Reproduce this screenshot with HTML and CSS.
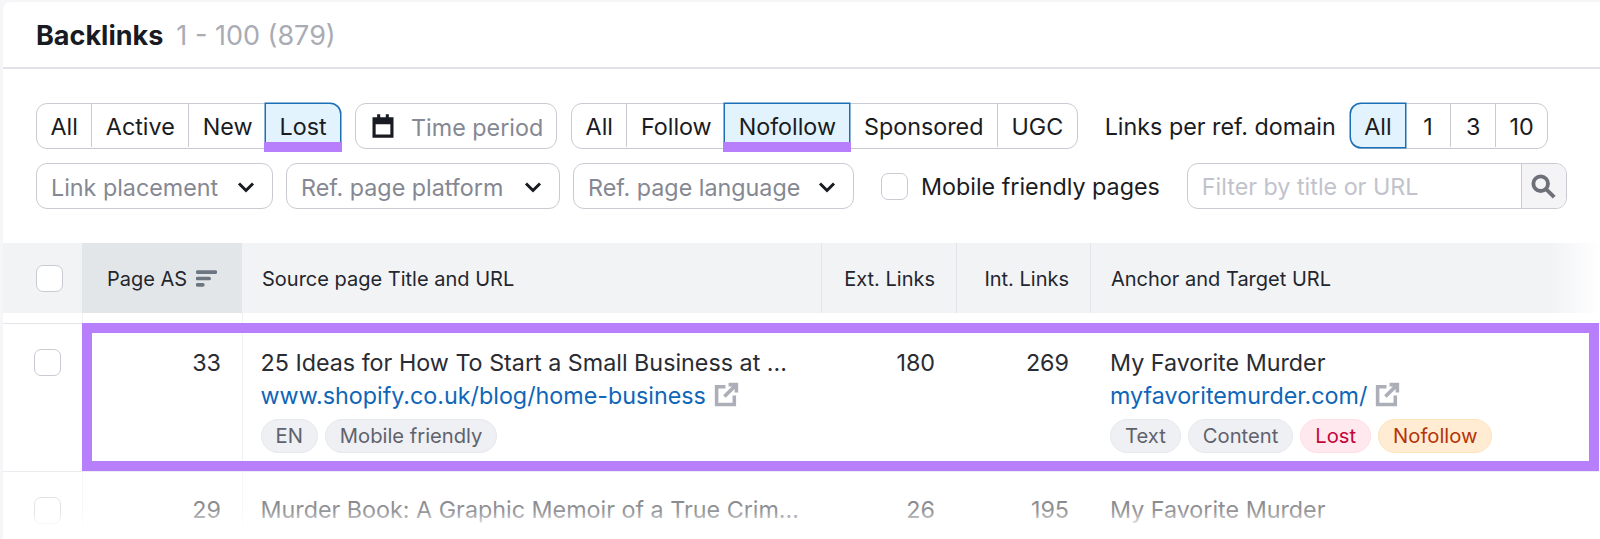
FILE: index.html
```html
<!DOCTYPE html>
<html lang="en">
<head>
<meta charset="utf-8">
<title>Backlinks</title>
<link rel="stylesheet" href="styles.css">
</head>
<body>
<main class="card">
  <header class="title-bar">
    <h1 class="title">Backlinks</h1>
    <span class="count">1 - 100 (879)</span>
  </header>
  <section class="filters">
    <div class="filter-row row-one">
      <div class="seg">
        <button class="seg-item">All</button>
        <button class="seg-item">Active</button>
        <button class="seg-item">New</button>
        <button class="seg-item active marked last">Lost</button>
      </div>
      <button class="field period">
        <svg class="cal" viewBox="0 0 24 24" aria-hidden="true"><path d="M7 2h2.600v2.500h4.800V2H17v2.500h4V22H3V4.500h4V2zM5.700 10.500v8.800h12.600v-8.800H5.700z" fill-rule="evenodd"/></svg>
        <span class="muted">Time period</span>
      </button>
      <div class="seg">
        <button class="seg-item">All</button>
        <button class="seg-item">Follow</button>
        <button class="seg-item active marked">Nofollow</button>
        <button class="seg-item">Sponsored</button>
        <button class="seg-item">UGC</button>
      </div>
      <span class="per-label">Links per ref. domain</span>
      <div class="seg">
        <button class="seg-item active first">All</button>
        <button class="seg-item digit">1</button>
        <button class="seg-item digit">3</button>
        <button class="seg-item digit">10</button>
      </div>
    </div>
    <div class="filter-row row-two">
      <button class="field select w-placement"><span class="muted">Link placement</span><svg class="chev" viewBox="0 0 18 12" aria-hidden="true"><path d="M2 2.500l7 7 7-7"/></svg></button>
      <button class="field select w-platform"><span class="muted">Ref. page platform</span><svg class="chev" viewBox="0 0 18 12" aria-hidden="true"><path d="M2 2.500l7 7 7-7"/></svg></button>
      <button class="field select w-language"><span class="muted">Ref. page language</span><svg class="chev" viewBox="0 0 18 12" aria-hidden="true"><path d="M2 2.500l7 7 7-7"/></svg></button>
      <label class="mobile"><span class="box"></span><span>Mobile friendly pages</span></label>
      <div class="search">
        <span class="search-input">Filter by title or URL</span>
        <span class="search-btn"><svg viewBox="0 0 24 24" aria-hidden="true"><circle cx="9.500" cy="9.500" r="6.500"/><path d="M14.500 14.500l7 7"/></svg></span>
      </div>
    </div>
  </section>
  <section class="table">
    <div class="thead grid">
      <div class="cell check"><span class="box"></span></div>
      <div class="cell sorted">Page AS
        <svg class="sort" viewBox="0 0 20 16" aria-hidden="true"><path d="M1.500 2h17M1.500 8h11M1.500 14h5"/></svg>
      </div>
      <div class="cell">Source page Title and URL</div>
      <div class="cell num ruled">Ext. Links</div>
      <div class="cell num ruled">Int. Links</div>
      <div class="cell ruled">Anchor and Target URL</div>
    </div>
    <div class="spacer grid"><div></div><div class="colrule"></div><div class="colrule"></div></div>
    <div class="row grid">
      <div class="td check"><span class="box"></span></div>
      <div class="td num tall colrule">33</div>
      <div class="td colrule">
        <div class="line">25 Ideas for How To Start a Small Business at ...</div>
        <div class="link"><a>www.shopify.co.uk/blog/home-business</a><svg class="ext" viewBox="0 0 24 24" aria-hidden="true"><path d="M11 4.500H2.500v17h17V13M10 14L21 3M14 2.500h7.500V10"/></svg></div>
        <div class="tags"><span class="tag">EN</span><span class="tag">Mobile friendly</span></div>
      </div>
      <div class="td num">180</div>
      <div class="td num">269</div>
      <div class="td">
        <div class="line">My Favorite Murder</div>
        <div class="link"><a>myfavoritemurder.com/</a><svg class="ext" viewBox="0 0 24 24" aria-hidden="true"><path d="M11 4.500H2.500v17h17V13M10 14L21 3M14 2.500h7.500V10"/></svg></div>
        <div class="tags"><span class="tag">Text</span><span class="tag">Content</span><span class="tag lost">Lost</span><span class="tag nofollow">Nofollow</span></div>
      </div>
      <div class="highlight"></div>
    </div>
    <div class="row next grid">
      <div class="td check"><span class="box"></span></div>
      <div class="td num colrule">29</div>
      <div class="td colrule"><div class="line">Murder Book: A Graphic Memoir of a True Crim...</div></div>
      <div class="td num">26</div>
      <div class="td num">195</div>
      <div class="td"><div class="line">My Favorite Murder</div></div>
    </div>
    <div class="fade-right"></div>
    <div class="fade-bottom"></div>
  </section>
</main>
</body>
</html>
```
FILE: styles.css
```css
* { box-sizing: border-box; }
html, body { margin: 0; height: 539px; overflow: hidden; background: #f6f6f8; }
body { font-family: Inter, "Liberation Sans", sans-serif; color: #1a1c22; }
button { font: inherit; color: inherit; background: none; margin: 0; }
h1 { margin: 0; }

.card { margin: 2px 0 0 3px; height: 537px; background: #fff; border-top-left-radius: 8px; overflow: hidden; }

.title-bar { height: 67px; border-bottom: 2px solid #e2e3e9; display: flex; align-items: center; gap: 13px; padding: 2px 0 0 33px; }
.title { font-size: 27px; font-weight: 700; color: #191b23; }
.count { font-size: 27px; color: #a9abb5; }

.filters { padding-top: 34px; height: 174px; }
.filter-row { display: flex; align-items: center; padding-left: 33px; height: 46px; }
.row-two { margin-top: 14px; }

.seg { display: flex; height: 46px; border: 1.500px solid #c9cad2; border-radius: 11px; }
.seg-item { border: 0; border-left: 1.500px solid #c9cad2; padding: 2px 13.500px 0; font-size: 23.300px; height: 43px; position: relative; white-space: nowrap; }
.seg-item:first-child { border-left: 0; }
.seg-item.digit { min-width: 45px; }
.seg-item.active { background: #e3f3fe; box-shadow: 0 0 0 1.500px #1a6fb5; z-index: 1; border-left: 0; }
.seg-item.last { border-radius: 0 10px 0 0; }
.seg-item.first { border-radius: 10px 0 0 10px; }
.seg-item.marked::after { content: ""; position: absolute; left: -2px; right: -2px; bottom: -4.500px; height: 10px; background: #b77ffb; }

.field { height: 46px; border: 1.500px solid #c9cad2; border-radius: 11px; display: flex; align-items: center; font-size: 23.300px; padding: 2px 14px 0; white-space: nowrap; }
.muted { color: #858892; }
.period { margin: 0 14px; padding-left: 13px; gap: 14px; width: 202px; }
.cal { width: 28px; height: 28px; margin-top: -2px; fill: #191b23; flex: none; }
.select { justify-content: space-between; margin-right: 13px; }
.w-placement { width: 237px; }
.w-platform { width: 274px; }
.w-language { width: 281px; }
.chev { width: 18px; height: 12px; fill: none; stroke: #191b23; stroke-width: 3; margin-right: 3px; flex: none; }
.per-label { font-size: 23.300px; margin: 0 14px 0 27px; white-space: nowrap; }

.box { display: block; width: 27px; height: 27px; border: 1.500px solid #c9cad2; border-radius: 7px; background: #fff; flex: none; }
.mobile { display: flex; align-items: center; gap: 13px; font-size: 23.300px; margin-left: 14px; white-space: nowrap; }

.search { display: flex; width: 380px; height: 46px; margin-left: 27px; border: 1.500px solid #c9cad2; border-radius: 11px; overflow: hidden; }
.search-input { flex: 1; font-size: 23.300px; color: #c1c3cb; padding-left: 14px; line-height: 45px; white-space: nowrap; }
.search-btn { width: 45px; border-left: 1.500px solid #c9cad2; background: #f4f4f6; display: flex; align-items: center; justify-content: center; }
.search-btn svg { width: 27px; height: 27px; fill: none; stroke: #6d6f79; stroke-width: 3.400; }

.table { position: relative; height: 296px; }
.grid { display: grid; grid-template-columns: 79px 160px 579px 135px 134px 1fr; }
.thead { height: 70px; background: #f2f3f5; font-size: 20px; color: #24262e; }
.cell { display: flex; align-items: center; padding: 2px 21px 0 20px; white-space: nowrap; }
.cell.check { padding: 0 0 0 33px; }
.cell.sorted { background: #e3e6e8; padding-left: 25px; gap: 9px; }
.cell.num { justify-content: flex-end; }
.ruled { border-left: 1.500px solid #e4e5e9; }
.sort { width: 21px; height: 17px; margin-top: -2px; fill: none; stroke: #6c7680; stroke-width: 3.500; stroke-linecap: round; }

.spacer { height: 11px; border-bottom: 1.500px solid #e4e5e9; }
.colrule { border-left: 1.500px solid #f1f1f4; }
.row { position: relative; height: 148px; border-bottom: 1.500px solid #e4e5e9; }
.td { padding: 23px 21px 0 20px; font-size: 23.300px; line-height: 32px; color: #2a2c33; white-space: nowrap; }
.td.colrule { padding-left: 17.500px; }
.td.check { padding: 25px 0 0 31px; }
.td.num { text-align: right; }
.next .td { padding-top: 22px; }
.next .td.check { padding-top: 25px; }
.link { display: flex; align-items: center; gap: 8px; margin-top: 1px; color: #0f66b8; height: 32px; }
.ext { width: 25px; height: 25px; fill: none; stroke: #acaeb8; stroke-width: 3.400; margin-top: -4px; flex: none; }
.tags { display: flex; gap: 7px; margin-top: 7px; }
.tag { height: 34px; line-height: 32px; border: 1px solid #e8e9ee; background: #eff0f3; border-radius: 17px; padding: 0 14px; font-size: 20.200px; color: #5f626d; }
.tag.lost { background: #ffe9ee; border-color: #ffdfe6; color: #c2063a; }
.tag.nofollow { background: #ffecd2; border-color: #ffe3ba; color: #b4340c; }
.highlight { position: absolute; left: 79px; right: 1px; top: -1px; bottom: 0; border: 10px solid #b77ffb; pointer-events: none; }
.next { border-bottom: 0; }

.fade-right { position: absolute; right: 0; top: 0; width: 50px; height: 70px; background: linear-gradient(to right, rgba(255,255,255,0), #fff); }
.fade-bottom { position: absolute; left: 0; right: 0; bottom: 0; height: 68px; background: linear-gradient(to bottom, rgba(255,255,255,.3) 0, rgba(255,255,255,.5) 60%, #fff 85%); }
```
